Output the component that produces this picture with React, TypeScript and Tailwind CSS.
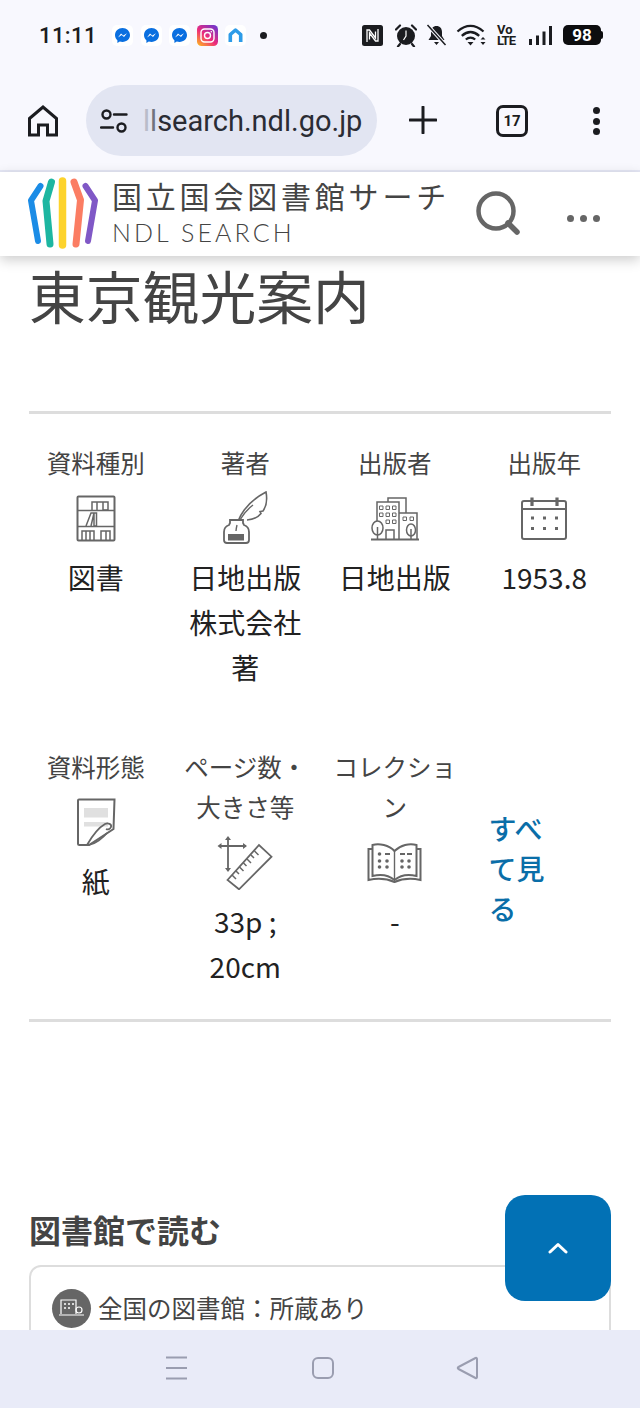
import type { ReactNode } from "react"

function Messenger() {
  return (
    <span className="flex h-[21px] w-[21px] items-center justify-center rounded-[5px] bg-white">
      <svg width="17" height="17" viewBox="0 0 17 17">
        <path d="M8.500 1C4.300 1 1 4.100 1 8.100c0 2.100.9 3.900 2.400 5.200v2.600l2.400-1.300c.8.200 1.700.4 2.700.4 4.200 0 7.500-3 7.500-6.900S12.700 1 8.500 1z" fill="#0a6fe0" />
        <path d="M4 10.400l3-3.900 2.300 2 3.700-2.300-3 3.900-2.300-2z" fill="#fff" />
      </svg>
    </span>
  )
}

function Instagram() {
  return (
    <svg width="21" height="21" viewBox="0 0 21 21">
      <defs>
        <linearGradient id="ig" x1="0.1" y1="1" x2="0.9" y2="0">
          <stop offset="0" stopColor="#fdb023" />
          <stop offset="0.45" stopColor="#ee2a7b" />
          <stop offset="1" stopColor="#6a35d0" />
        </linearGradient>
      </defs>
      <rect width="21" height="21" rx="4.500" fill="url(#ig)" />
      <rect x="4" y="4" width="13" height="13" rx="3.500" fill="none" stroke="#fff" strokeWidth="1.400" />
      <circle cx="10.500" cy="10.500" r="3" fill="none" stroke="#fff" strokeWidth="1.400" />
      <circle cx="14.300" cy="6.700" r="0.800" fill="#fff" />
    </svg>
  )
}

function StatusLeft() {
  return (
    <div className="flex items-center">
      <span className="w-[57px] whitespace-nowrap font-['Roboto',sans-serif] text-[22px] font-medium tracking-[0.4px] text-[#1b1c20]">11:11</span>
      <span className="ml-[16px] flex gap-[7.500px]">
        <Messenger />
        <Messenger />
        <Messenger />
      </span>
      <span className="ml-[7px]">
        <Instagram />
      </span>
      <span className="ml-[7px] flex h-[21px] w-[21px] items-center justify-center rounded-[5px] bg-white">
        <svg width="15" height="15" viewBox="0 0 15 15">
          <path d="M2.300 14V6.500L7.500 2l5.200 4.500V14" fill="none" stroke="#2d9be8" strokeWidth="3.600" strokeLinejoin="round" />
        </svg>
      </span>
      <span className="ml-[14px] h-[7px] w-[7px] rounded-full bg-[#1b1c20]" />
    </div>
  )
}

function StatusRight() {
  return (
    <div className="flex items-center text-[#1b1c20]">
      <svg width="21" height="21" viewBox="0 0 21 21">
        <rect width="21" height="21" rx="2.500" fill="#1b1c20" />
        <path d="M5 17V5h2.500l6 8V6.500M16 4v12h-2.500l-6-8v6.500" fill="none" stroke="#fff" strokeWidth="1.300" />
      </svg>
      <svg className="ml-[12px]" width="22" height="23" viewBox="0 0 22 23">
        <circle cx="11" cy="12" r="9" fill="#1b1c20" />
        <path d="M11 6.500V12l-2.500 4" fill="none" stroke="#fff" strokeWidth="1.200" />
        <path d="M1 5.500L5 1.500M21 5.500L17 1.500M5 20l-2 2.500M17 20l2 2.500" stroke="#1b1c20" strokeWidth="2.200" strokeLinecap="round" />
      </svg>
      <svg className="ml-[9px]" width="21" height="22" viewBox="0 0 21 22">
        <path d="M10.500 2c3.500 0 5.500 2.600 5.500 6v4l2.500 4H2.500L5 12V8c0-3.400 2-6 5.500-6zM8 18h5l-2.500 3z" fill="#1b1c20" />
        <path d="M1.500 1L19.500 21" stroke="#f8f8fe" strokeWidth="3.500" />
        <path d="M1.500 1L19.500 21" stroke="#1b1c20" strokeWidth="1.500" />
      </svg>
      <svg className="ml-[9px]" width="30" height="23" viewBox="0 0 30 23">
        <path d="M1.500 7.500C6 3.500 10 1.800 14.500 1.800S23 3.500 27.500 7.500" fill="none" stroke="#1b1c20" strokeWidth="2.300" />
        <path d="M5.800 11.800C8.500 9.400 11.500 8 14.500 8s6 1.400 8.700 3.800" fill="none" stroke="#1b1c20" strokeWidth="2.300" />
        <path d="M9.800 15.500c1.400-1.200 3-1.900 4.700-1.900s3.300.7 4.700 1.900" fill="none" stroke="#1b1c20" strokeWidth="2.300" />
        <path d="M11.500 18h6l-3 3.500zM24.500 15.500h5L27 13zM24.500 18h5L27 21z" fill="#1b1c20" />
      </svg>
      <span className="ml-[11px] flex w-[19px] flex-col font-['Roboto',sans-serif] text-[13px] font-bold leading-[11px] text-[#1b1c20]">
        <span>Vo</span>
        <span className="tracking-[-1px]">LTE</span>
      </span>
      <svg className="ml-[13px]" width="23" height="21" viewBox="0 0 23 21">
        <path d="M1.500 14v6M8.500 10.500V20M15 6.500V20M21.500 1v19" stroke="#1b1c20" strokeWidth="3" />
      </svg>
      <span className="relative ml-[11px] flex h-[20px] w-[38px] items-center justify-center rounded-[5px] bg-[#0d0d0f] font-['Roboto',sans-serif] text-[17px] font-bold leading-[20px] text-white">
        98
        <span className="absolute -right-[2px] top-[6px] h-[8px] w-[2px] rounded-r-[2px] bg-[#0d0d0f]" />
      </span>
    </div>
  )
}

function BrowserBar() {
  return (
    <div className="flex h-[102px] items-start border-b-2 border-[#e5e7f5] pl-[28px] pt-[15px]">
      <svg className="mt-[20px]" width="30" height="32" viewBox="0 0 30 32">
        <path d="M1.500 13.500L15 2l13.500 11.500V30H19.500V20h-9v10H1.500z" fill="none" stroke="#1b1c20" strokeWidth="3" />
      </svg>
      <div className="ml-[28px] flex h-[71px] w-[291px] items-center overflow-hidden rounded-full bg-[#e2e5f2] pl-[14px]">
        <svg width="28" height="26" viewBox="0 0 28 26">
          <circle cx="6.500" cy="6.500" r="4" fill="none" stroke="#1b1c20" strokeWidth="2.400" />
          <path d="M14 6.500H26.500M1 19.500H13" stroke="#1b1c20" strokeWidth="2.400" strokeLinecap="round" />
          <circle cx="21.500" cy="19.500" r="4" fill="none" stroke="#1b1c20" strokeWidth="2.400" />
        </svg>
        <span className="ml-[15px] whitespace-nowrap pt-[3px] font-['Roboto',sans-serif] text-[29px] text-[#2a2c34]">
          <span className="text-[#b9bcc9]">l</span>
          <span className="text-[#70737f]">l</span>search.ndl.go.jp
        </span>
      </div>
      <svg className="ml-[32px] mt-[21px]" width="28" height="28" viewBox="0 0 28 28">
        <path d="M14 1V27M1 14H27" stroke="#1b1c20" strokeWidth="3" strokeLinecap="round" />
      </svg>
      <span className="ml-[59px] mt-[20px] flex h-[32px] w-[32px] items-center justify-center rounded-[7px] border-[3px] border-[#1b1c20] font-['Roboto',sans-serif] text-[15px] font-bold text-[#1b1c20]">
        17
      </span>
      <span className="ml-[65px] mt-[22px] flex flex-col gap-[3.500px]">
        <span className="h-[7px] w-[7px] rounded-full bg-[#1b1c20]" />
        <span className="h-[7px] w-[7px] rounded-full bg-[#1b1c20]" />
        <span className="h-[7px] w-[7px] rounded-full bg-[#1b1c20]" />
      </span>
    </div>
  )
}

function NdlLogo() {
  return (
    <svg className="mb-[2px]" width="70" height="72" viewBox="0 0 70 72">
      <g fill="none" strokeLinecap="round" strokeLinejoin="round">
        <path d="M12.500 9L3 23.500 10 64" stroke="#1b8ce6" strokeWidth="6" />
        <path d="M23.500 5L18 24 22 67" stroke="#1db6a1" strokeWidth="7" />
        <path d="M34.500 4V68" stroke="#fdd32c" strokeWidth="7.500" />
        <path d="M46 5L52.500 23 48 67" stroke="#fb7d63" strokeWidth="7" />
        <path d="M57.500 9L67 23.500 60 64" stroke="#8058c6" strokeWidth="6" />
      </g>
    </svg>
  )
}

function SiteHeader() {
  return (
    <header className="relative z-10 flex h-[84px] items-center bg-white pl-[28px] shadow-[0_4px_12px_rgba(0,0,0,0.2)]">
      <NdlLogo />
      <div className="ml-[14px] flex w-[345px] flex-col pb-[2px]">
        <span className="whitespace-nowrap text-[30px] leading-[38px] tracking-[3.800px] text-[#444]">国立国会図書館サーチ</span>
        <span className="whitespace-nowrap font-['Lato',sans-serif] text-[25px] font-light leading-[36px] tracking-[3.100px] text-[#444]">NDL SEARCH</span>
      </div>
      <svg className="ml-[18px]" width="46" height="46" viewBox="0 0 46 46">
        <circle cx="21" cy="20" r="17.500" fill="none" stroke="#666" strokeWidth="4.500" />
        <path d="M33 32L42 41" stroke="#666" strokeWidth="5.500" strokeLinecap="round" />
      </svg>
      <span className="ml-[46px] mt-[8px] flex gap-[6px]">
        <span className="h-[7px] w-[7px] rounded-full bg-[#666]" />
        <span className="h-[7px] w-[7px] rounded-full bg-[#666]" />
        <span className="h-[7px] w-[7px] rounded-full bg-[#666]" />
      </span>
    </header>
  )
}

function ShelfIcon() {
  return (
    <svg width="40" height="48" viewBox="0 0 40 48" fill="none" stroke="#666" strokeWidth="1.500">
      <rect x="1.500" y="1.500" width="37" height="44" rx="1" strokeWidth="2" />
      <path d="M1.500 15.500H38.500M1.500 31.500H38.500" strokeWidth="1.600" />
      <path d="M16 15V7h5v8M21 7h6v8M27 7h5v8h-5" />
      <path d="M10 31l5-13h3l-3 13M18 18v13h2.500V18z" />
      <path d="M6 45V36h4v9M10 36h4v9M14 36h4v9M25 45V36h5v9M30 36h4v9" />
    </svg>
  )
}

function QuillIcon() {
  return (
    <svg className="-mt-[3px]" width="46" height="54" viewBox="0 0 46 54" fill="none" stroke="#666" strokeWidth="1.600">
      <path d="M14 40C15 26 25 11 44 1c1.500 8 .5 14-3 19l-3 .5 1 2c-3 4-8 6-14 6.500" />
      <path d="M14 40c2-9 8-19 17-26" strokeWidth="1.400" />
      <path d="M8 29h13v3l1 2c3 1 5 4 5 7v8c0 2-1 3-3 3H5c-2 0-3-1-3-3v-8c0-3 2-6 5-7l1-2z" fill="#fff" strokeWidth="1.800" />
      <path d="M14 40c.2-2 .5-4 1-6" strokeWidth="1.400" />
      <rect x="6" y="43" width="16" height="6.500" fill="#666" stroke="none" />
    </svg>
  )
}

function BuildingIcon() {
  return (
    <svg width="50" height="44" viewBox="0 0 50 44" fill="none" stroke="#666" strokeWidth="1.500">
      <path d="M7 28V5h22v37M18 5V1h18v15M29 16h18v26" />
      <path d="M1 42.500H49" strokeWidth="1.800" />
      <path d="M16 42V33h8v9" />
      <path d="M9.500 9h3.500v3.500H9.500zM16 9h3.500v3.500H16zM22.500 9H26v3.500h-3.500zM9.500 16h3.500v3.500H9.500zM16 16h3.500v3.500H16zM22.500 16H26v3.500h-3.500zM16 23h3.500v3.500H16zM22.500 23H26v3.500h-3.500zM33 20h3.500v3.500H33zM40 20h3.500v3.500H40z" strokeWidth="1" />
      <ellipse cx="7.500" cy="31" rx="5.500" ry="7" fill="#fff" />
      <path d="M7.500 30V42" />
      <ellipse cx="41" cy="33" rx="4.500" ry="6" fill="#fff" />
      <path d="M41 32V42" />
    </svg>
  )
}

function CalendarIcon() {
  return (
    <svg width="48" height="46" viewBox="0 0 48 46" fill="none" stroke="#666">
      <rect x="2" y="5" width="44" height="38" rx="2" strokeWidth="2" />
      <path d="M2 13H46" strokeWidth="2" />
      <path d="M12 1.500V10M37 1.500V10" strokeWidth="3.200" />
      <path d="M11 20.500h3v3h-3zM23 20.500h3v3h-3zM35 20.500h3v3h-3zM11 31h3v3h-3zM23 31h3v3h-3zM35 31h3v3h-3z" fill="#666" stroke="none" />
    </svg>
  )
}

function PaperIcon() {
  return (
    <svg width="40" height="50" viewBox="0 0 40 50" fill="none" stroke="#666" strokeWidth="2">
      <rect x="8" y="10" width="24" height="9.500" fill="#e0e0e0" stroke="none" />
      <rect x="8" y="24" width="24" height="4.500" fill="#e0e0e0" stroke="none" />
      <path d="M3 1.500H38.500L37.500 31 13 47H3.500C2.500 47 2 46.500 2 45.500V2.500C2 2 2.500 1.500 3 1.500z" />
      <path d="M11 47C15 40 22 30 29 26c3-1.500 7 0 6 3-.7 2-3 3-5 2" strokeWidth="1.800" />
      <path d="M13 47c6-1 14-7 18-12" strokeWidth="1.600" />
    </svg>
  )
}

function SizeIcon() {
  return (
    <svg width="56" height="54" viewBox="0 0 56 54" fill="none" stroke="#666" strokeWidth="1.500">
      <path d="M11 2V34M2 10H29" strokeWidth="1.800" />
      <path d="M11 0l-3 4h6zM11 36l-3-4h6zM0.500 10l4-3v6zM30 10l-4-3v6z" fill="#666" stroke="none" />
      <path d="M10.500 44L42 9 54.500 20.700 22 53.300z" strokeWidth="1.800" />
      <path d="M15 39l4 4M19 35l3 3M22.500 31l4 4M26.500 27l3 3M30 23l4 4M34 19l3 3M37.500 15l4 4" />
    </svg>
  )
}

function BookIcon() {
  return (
    <svg width="56" height="42" viewBox="0 0 56 42" fill="none" stroke="#666" strokeWidth="2">
      <path d="M27.500 9C22 3 12 1 5.500 3v31c8-2 16-1 22 4 6-5 14-6 22-4V3c-7-2-16 0-22 6z" />
      <path d="M5.500 7H1.500V38c9-2 18-1.500 26 2 8-3.500 17-4 26-2V7h-4" />
      <path d="M27.500 9V38" strokeWidth="1.400" />
      <g fill="#666" stroke="none">
        <circle cx="12.500" cy="12" r="1.800" />
        <circle cx="12.500" cy="19" r="1.800" />
        <circle cx="12.500" cy="25" r="1.800" />
        <circle cx="20" cy="19" r="1.800" />
        <circle cx="20" cy="25" r="1.800" />
        <circle cx="35" cy="19" r="1.800" />
        <circle cx="35" cy="25" r="1.800" />
        <circle cx="42" cy="19" r="1.800" />
        <circle cx="42" cy="25" r="1.800" />
        <rect x="18" y="11" width="5" height="2" />
        <rect x="33" y="11" width="5" height="2" />
        <rect x="40" y="11" width="5" height="2" />
      </g>
    </svg>
  )
}

function InfoCell({ label, icon, value }: { label: ReactNode; icon: ReactNode; value: ReactNode }) {
  return (
    <div className="flex flex-col items-center px-[12px] text-center">
      <div className="text-[24.500px] leading-[40px] text-[#444]">{label}</div>
      <div className="my-[11px] flex h-[50px] items-center justify-center">{icon}</div>
      <div className="text-[28px] leading-[45px] text-[#222]">{value}</div>
    </div>
  )
}

export default function App() {
  return (
    <div className="flex h-[1408px] w-[640px] flex-col overflow-hidden bg-white font-['Noto_Sans_CJK_JP',sans-serif]">
      <div className="bg-[#f8f8fe]">
        <div className="flex h-[70px] items-center justify-between pl-[39px] pr-[39px]">
          <StatusLeft />
          <StatusRight />
        </div>
        <BrowserBar />
      </div>
      <SiteHeader />

      <main className="relative min-h-0 flex-1">
        <h1 className="ml-[29px] mt-[2px] text-[56.800px] font-normal leading-[72px] text-[#444]">東京観光案内</h1>
        <hr className="mx-[29px] mt-[81px] border-t-[3px] border-[#ddd]" />

        <div className="mx-[21px] mt-[29px] grid grid-cols-4 items-start gap-y-[57px]">
          <InfoCell label="資料種別" icon={<ShelfIcon />} value="図書" />
          <InfoCell label="著者" icon={<QuillIcon />} value="日地出版株式会社著" />
          <InfoCell label="出版者" icon={<BuildingIcon />} value="日地出版" />
          <InfoCell label="出版年" icon={<CalendarIcon />} value="1953.8" />
          <InfoCell label="資料形態" icon={<PaperIcon />} value="紙" />
          <InfoCell label="ページ数・大きさ等" icon={<SizeIcon />} value="33p ; 20cm" />
          <InfoCell label="コレクション" icon={<BookIcon />} value="-" />
          <div className="flex h-full items-center pl-[19px]">
            <a className="w-[58px] text-[28px] font-medium leading-[40px] text-[#0a6ea8]">すべて見る</a>
          </div>
        </div>

        <hr className="mx-[29px] mt-[30px] border-t-[3px] border-[#ddd]" />

        <h2 className="ml-[29px] mt-[185px] text-[32px] font-bold leading-[45px] text-[#444]">図書館で読む</h2>
        <div className="mx-[29px] mt-[13px] h-[120px] rounded-[12px] border-2 border-[#ddd] pl-[21px] pt-[21px]">
          <div className="flex items-center">
            <span className="flex h-[39px] w-[39px] items-center justify-center rounded-full bg-[#666]">
              <svg width="25" height="20" viewBox="0 0 25 20" fill="none" stroke="#fff" strokeWidth="1.200">
                <path d="M2 16V2h15v14M0 17H25" />
                <path d="M5 6h2M9 6h2M13 6h2M5 10h2M9 10h2" strokeWidth="1.600" />
                <circle cx="20" cy="12" r="3" />
              </svg>
            </span>
            <span className="ml-[7px] text-[24.500px] leading-[40px] text-[#444]">全国の図書館：所蔵あり</span>
          </div>
        </div>

        <button className="absolute right-[29px] top-[939px] flex h-[106px] w-[106px] items-center justify-center rounded-[20px] bg-[#0271b5]">
          <svg width="20" height="12" viewBox="0 0 20 12">
            <path d="M2 10L10 2.500 18 10" fill="none" stroke="#fff" strokeWidth="3" strokeLinecap="round" strokeLinejoin="round" />
          </svg>
        </button>
      </main>

      <nav className="relative z-10 flex h-[78px] items-center bg-[#e9ebf8] pb-[2px] pl-[166px]">
        <svg width="22" height="24" viewBox="0 0 22 24">
          <path d="M0 1.500H21M0 12H21M0 22.500H21" stroke="#9a9db0" strokeWidth="2" />
        </svg>
        <svg className="ml-[124px]" width="22" height="22" viewBox="0 0 22 22">
          <rect x="1" y="1" width="20" height="20" rx="5" fill="none" stroke="#9a9db0" strokeWidth="2" />
        </svg>
        <svg className="ml-[122px]" width="23" height="24" viewBox="0 0 23 24">
          <path d="M2.500 11L19.500 2c1-.5 1.500 0 1.500 1v18c0 1-.5 1.500-1.500 1L2.500 13c-1-.5-1-1.500 0-2z" fill="none" stroke="#9a9db0" strokeWidth="2" />
        </svg>
      </nav>
    </div>
  )
}
